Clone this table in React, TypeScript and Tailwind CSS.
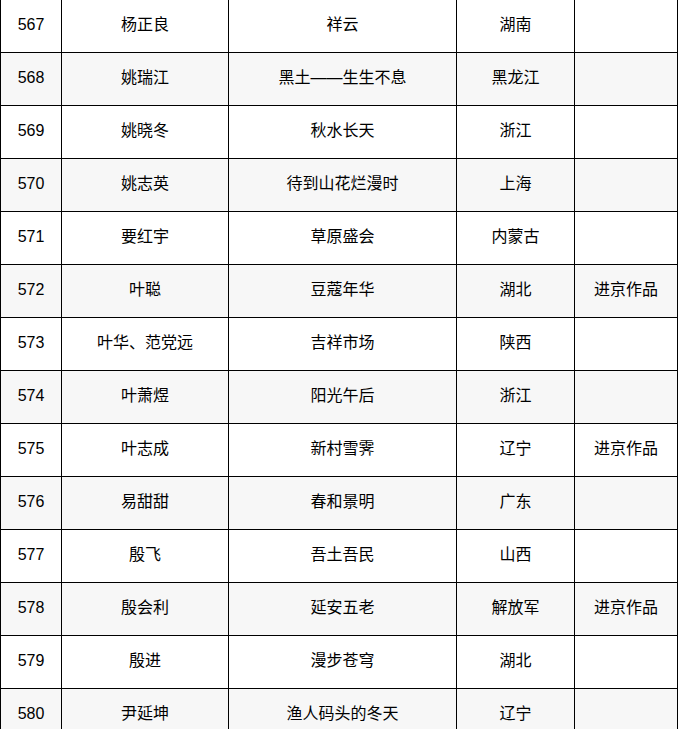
import React from "react";

const rows: [string, string, string, string, string][] = [
  ["567", "杨正良", "祥云", "湖南", ""],
  ["568", "姚瑞江", "黑土——生生不息", "黑龙江", ""],
  ["569", "姚晓冬", "秋水长天", "浙江", ""],
  ["570", "姚志英", "待到山花烂漫时", "上海", ""],
  ["571", "要红宇", "草原盛会", "内蒙古", ""],
  ["572", "叶聪", "豆蔻年华", "湖北", "进京作品"],
  ["573", "叶华、范党远", "吉祥市场", "陕西", ""],
  ["574", "叶萧煜", "阳光午后", "浙江", ""],
  ["575", "叶志成", "新村雪霁", "辽宁", "进京作品"],
  ["576", "易甜甜", "春和景明", "广东", ""],
  ["577", "殷飞", "吾土吾民", "山西", ""],
  ["578", "殷会利", "延安五老", "解放军", "进京作品"],
  ["579", "殷进", "漫步苍穹", "湖北", ""],
  ["580", "尹延坤", "渔人码头的冬天", "辽宁", ""],
];

const widths = ["w-[61px]", "w-[167px]", "w-[228px]", "w-[118px]", "w-[103px]"];

export default function App() {
  return (
    <div className="bg-white h-[729px] overflow-hidden">
      <div
        className="w-[678px] -mt-px border-t border-l border-black text-[16px] text-black"
        style={{ fontFamily: '"Liberation Sans", "Noto Sans CJK SC", sans-serif' }}
      >
        {rows.map((r, i) => (
          <div
            key={r[0]}
            className={`flex h-[53px] border-b border-black ${i % 2 === 1 ? "bg-[#f7f7f7]" : "bg-white"}`}
          >
            {r.map((c, j) => (
              <div
                key={j}
                className={`${widths[j]} shrink-0 border-r border-black flex items-center justify-center pb-[2px]`}
              >
                {c}
              </div>
            ))}
          </div>
        ))}
      </div>
    </div>
  );
}
